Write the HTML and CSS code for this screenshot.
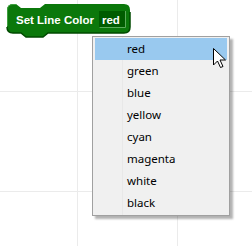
FILE: index.html
```html
<!DOCTYPE html>
<html lang="en">
<head>
    <meta charset="UTF-8">
    <title>Set Line Color</title>
    <link rel="stylesheet" href="styles.css">
</head>
<body>
    <div class="workspace">
        <svg class="block" width="132" height="40" viewBox="0 0 132 40">
            <path class="block-shape" d="M7,10 Q7,4 13,4 L16,4 L21,8 L40,8 L45,4 L124,4 Q130,4 130,10 L130,27 Q130,33 124,33 L48,33 L43,37 L26,37 L21,33 L13,33 Q7,33 7,27 Z"/>
            <path class="block-dark" d="M130,12 L130,27 Q130,33 124,33 L48,33 L43,37 L26,37 L21,33 L13,33 Q7,33 7,27"/>
            <path class="block-light" d="M7.5,26 L7.5,10 Q7.5,4.5 13,4.5 L16,4.5"/>
            <text class="block-label" x="16" y="24">Set Line Color</text>
            <rect class="field-box" x="99" y="11" width="27" height="17"/>
            <path class="field-edge" d="M99.5,27.5 L125.5,27.5 L125.5,11"/>
            <text class="block-label" x="102" y="24">red</text>
        </svg>

        <div class="menu">
            <div class="menu-item active">red</div>
            <div class="menu-item">green</div>
            <div class="menu-item">blue</div>
            <div class="menu-item">yellow</div>
            <div class="menu-item">cyan</div>
            <div class="menu-item">magenta</div>
            <div class="menu-item">white</div>
            <div class="menu-item">black</div>
        </div>

        <svg class="cursor" width="14" height="21" viewBox="0 0 14 21">
            <path d="M0.5,0.5 L0.5,17 L4.5,13 L7.5,19.5 L10,18.5 L7,12 L12.5,12 Z" fill="#fff" stroke="#000" stroke-width="1"/>
        </svg>
    </div>
</body>
</html>
```

FILE: styles.css
```css
body {
    margin: 0;
    padding: 0;
    background-color: #fff;
}
.workspace {
    position: relative;
    width: 252px;
    height: 246px;
    overflow: hidden;
    background-color: #fff;
    background-image:
        linear-gradient(to right, transparent 77px, #ebebeb 77px, #ebebeb 78px, transparent 78px),
        linear-gradient(to bottom, transparent 91px, #ebebeb 91px, #ebebeb 92px, transparent 92px);
    background-size: 100px 100px;
}
.block {
    position: absolute;
    left: 0;
    top: 0;
}
.block-shape {
    fill: #0b780b;
}
.block-dark {
    fill: none;
    stroke: #004a00;
    stroke-width: 1.5;
}
.block-light {
    fill: none;
    stroke: #3fa03f;
    stroke-width: 1;
}
.block-label {
    font-family: "Liberation Sans", Arial, sans-serif;
    font-weight: bold;
    font-size: 11.5px;
    fill: #fff;
}
.field-box {
    fill: #005c00;
}
.field-edge {
    fill: none;
    stroke: #5aab5a;
    stroke-width: 1;
}
.menu {
    position: absolute;
    left: 92px;
    top: 36px;
    width: 132px;
    padding: 1px 2px;
    background: #f0f0f0;
    border: 1px solid #a0a0a0;
    box-shadow: 3px 3px 2px rgba(0, 0, 0, 0.3);
    background-image: linear-gradient(to right, transparent 29px, #e8e8e8 29px, #e8e8e8 30px, transparent 30px);
}
.menu-item {
    height: 22px;
    line-height: 22px;
    padding-left: 32px;
    font-family: "Noto Sans", "Open Sans", sans-serif;
    font-size: 11.5px;
    color: #000;
}
.menu-item.active {
    background-color: #99c9ef;
}
.cursor {
    position: absolute;
    left: 213px;
    top: 48px;
}
```
